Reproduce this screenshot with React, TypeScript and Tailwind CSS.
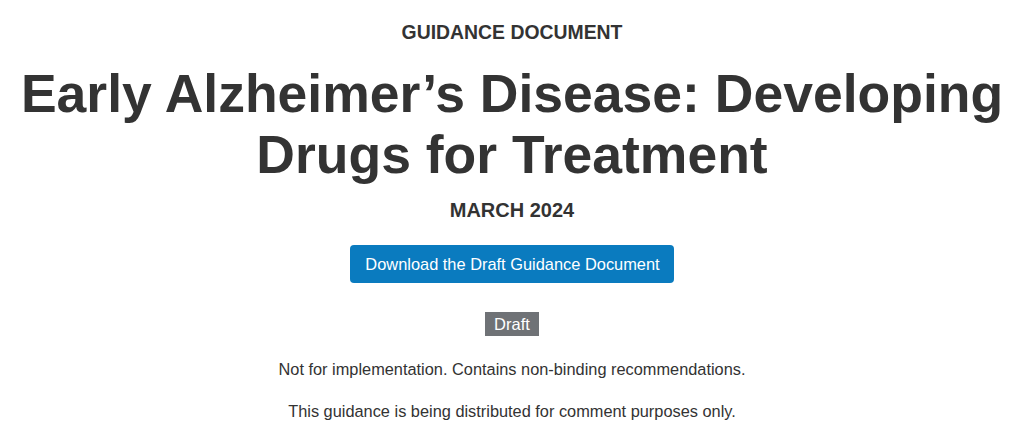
export default function App() {
  return (
    <div className="min-h-[435px] w-full bg-white font-['Liberation_Sans',Arial,sans-serif] text-[#333333]">
      <div className="mx-auto flex flex-col items-center px-4 pt-[21px] text-center">
        <p className="text-[19.4px] font-bold uppercase leading-[22px]">
          Guidance Document
        </p>
        <h1 className="mt-[20px] text-[53.5px] font-bold leading-[61px]">
          Early Alzheimer’s Disease: Developing
          <br />
          Drugs for Treatment
        </h1>
        <p className="mt-[12.5px] text-[20px] font-bold uppercase leading-[24px]">
          March 2024
        </p>
        <a
          href="#"
          className="mt-[23px] flex h-[38px] items-center rounded-[4px] bg-[#0a7bbf] pl-[15px] pr-[14px] text-[16.4px] leading-[20px] text-white"
        >
          Download the Draft Guidance Document
        </a>
        <span className="mt-[29px] flex h-[24px] items-center bg-[#6f7276] px-[9px] text-[16.5px] leading-[20px] text-white">
          Draft
        </span>
        <p className="mt-[23.3px] text-[16.35px] leading-[20px]">
          Not for implementation. Contains non-binding recommendations.
        </p>
        <p className="mt-[22px] text-[16.35px] leading-[20px]">
          This guidance is being distributed for comment purposes only.
        </p>
      </div>
    </div>
  );
}
